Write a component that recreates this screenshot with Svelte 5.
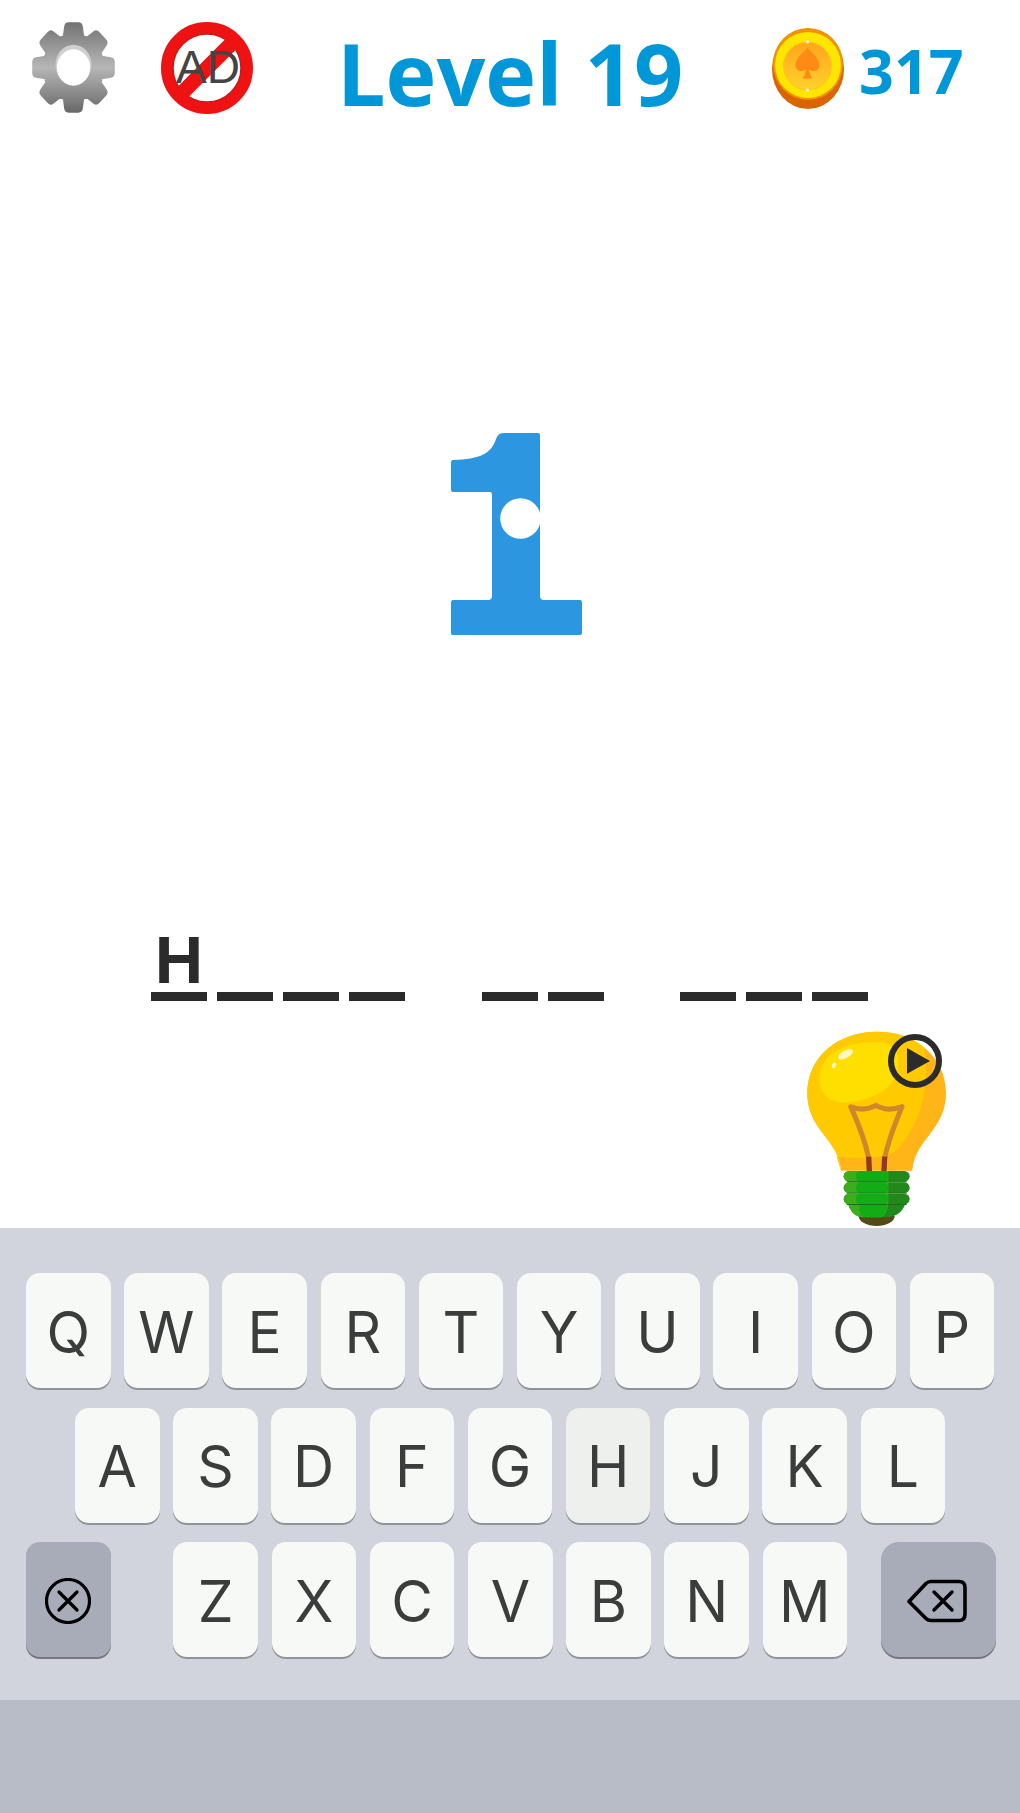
<script>
  const rows = ['QWERTYUIOP'.split(''), 'ASDFGHJKL'.split(''), 'ZXCVBNM'.split('')];
  const words = [4, 2, 3];

  // 8 toothed gear outline, centred on 0,0
  function gearPath() {
    let d = '';
    for (let i = 0; i < 8; i++) {
      const a = (i * Math.PI) / 4 - Math.PI / 2;
      const pts = [
        [a - 0.24, 29],
        [a - 0.13, 40],
        [a + 0.13, 40],
        [a + 0.24, 29]
      ];
      for (const [t, r] of pts) {
        d += (d ? 'L' : 'M') + (r * Math.cos(t)).toFixed(1) + ' ' + (r * Math.sin(t)).toFixed(1);
      }
    }
    return d + 'Z';
  }
</script>

<div class="screen">
  <header class="topbar">
    <svg class="gear" viewBox="-46 -46 92 92" preserveAspectRatio="none" aria-label="Settings">
      <defs>
        <linearGradient id="gearFill" gradientUnits="userSpaceOnUse" x1="0" y1="-46" x2="0" y2="46">
          <stop offset="0" stop-color="#707070" />
          <stop offset="0.5" stop-color="#b6b6b6" />
          <stop offset="1" stop-color="#666666" />
        </linearGradient>
      </defs>
      <path d={gearPath()} fill="url(#gearFill)" stroke="url(#gearFill)" stroke-width="10" stroke-linejoin="round" />
      <circle cx="0" cy="-3" r="19.500" fill="#cfcfcf" />
      <circle cx="0" cy="0" r="18" fill="#fff" />
    </svg>

    <svg class="noad" viewBox="0 0 94 94" aria-label="No ads">
      <circle cx="47" cy="47" r="40" fill="#fff" stroke="#ee1212" stroke-width="12" />
      <circle cx="47" cy="47" r="34" fill="none" stroke="#c81a1a" stroke-width="1.500" />
      <line x1="74" y1="20" x2="20" y2="74" stroke="#ee1212" stroke-width="15" />
      <text x="48" y="62" text-anchor="middle" class="adtext">AD</text>
    </svg>

    <h1>Level 19</h1>

    <svg class="coin" viewBox="0 0 72 82" aria-hidden="true">
      <defs>
        <linearGradient id="coinInner" x1="0" y1="0" x2="0" y2="1">
          <stop offset="0" stop-color="#ffa51c" />
          <stop offset="1" stop-color="#ffd22c" />
        </linearGradient>
      </defs>
      <ellipse cx="36" cy="42" rx="36" ry="40" fill="#d96400" />
      <ellipse cx="36" cy="37" rx="35" ry="36" fill="#f19200" />
      <ellipse cx="36" cy="38" rx="33" ry="33" fill="#ffe600" />
      <circle cx="35.500" cy="39" r="24" fill="url(#coinInner)" stroke="#ffc31e" stroke-width="1" />
      <path d="M35.500 20c3 6 12 10 12 18 0 6-7 8-10.500 4 .5 4 1.500 7 3.500 9.500H30.500c2-2.500 3-5.500 3.500-9.500-3.500 4-10.500 2-10.500-4 0-8 9-12 12-18Z" fill="#ff8a14" />
      <circle cx="35.500" cy="15" r="1.500" fill="#fff" />
      <circle cx="35.500" cy="63" r="1.500" fill="#fff" />
    </svg>
    <span class="score">317</span>
  </header>

  <div class="stage">
    <svg class="figure" viewBox="0 0 132 204" aria-label="1">
      <path
        d="M90 3Q90 1 88 1H53Q48 1 46 7C41 22 30 27 3 28Q1 28 1 31V58Q1 60 3 60H40Q42 60 42 63V164Q42 168 38 168H3Q1 168 1 171V201Q1 203 3 203H130Q132 203 132 201V171Q132 168 130 168H94Q90 168 90 164Z"
        fill="#2d96e0"
      />
      <circle cx="70.500" cy="86.500" r="20.300" fill="#fff" />
    </svg>
  </div>

  <div class="answer">
    {#each words as len, w}
      <div class="word">
        {#each Array(len) as _, i}
          <div class="slot">
            <span class="letter">{w === 0 && i === 0 ? 'H' : ''}</span>
            <span class="dash"></span>
          </div>
        {/each}
      </div>
    {/each}
  </div>

  <div class="hintrow">
    <svg class="bulb" viewBox="0 0 540 690" aria-label="Hint">
      <path d="M183 482C180 440 160 410 130 372C98 332 82 295 82 250C82 140 175 65 290 65C405 65 498 140 498 250C498 295 482 332 450 372C420 410 400 440 397 482Z" fill="#ffb518" />
      <path d="M183 482C180 440 160 410 130 372C98 332 82 295 82 250C82 140 175 65 290 65C350 65 395 80 430 110C455 200 430 340 345 425C300 445 240 448 170 440Z" fill="#ffcb00" />
      <path d="M118 205C122 130 190 96 290 96C345 96 365 130 352 185C335 245 265 272 195 278C150 281 116 250 118 205Z" fill="#ffdf00" />
      <ellipse cx="197" cy="133" rx="25" ry="11" transform="rotate(-28 197 133)" fill="#fff6c4" />
      <ellipse cx="162" cy="166" rx="6" ry="9" transform="rotate(25 162 166)" fill="#fff6c4" />
      <path d="M266 445C255 390 235 340 212 290C235 300 262 300 288 286C312 300 340 300 366 290C345 340 325 390 314 445" fill="none" stroke="#d0862a" stroke-width="15" stroke-linecap="round" stroke-linejoin="round" />
      <path d="M266 440L268 484M314 440L312 484" fill="none" stroke="#8f3a1c" stroke-width="16" />
      <path d="M236 618A54 30 0 0 0 344 618Z" fill="#544a16" />
      <path d="M205 582H375C372 600 350 622 320 622H250C225 622 208 600 205 582Z" fill="#20891a" />
      <path d="M205 582H325C322 600 318 622 300 622H250C225 622 208 600 205 582Z" fill="#3cae1c" />
      <path d="M238 582H322C322 600 318 622 300 622H255C240 622 238 600 238 582Z" fill="#12ac14" />
      {#each [483, 517, 551] as y}
        <rect x="191" {y} width="198" height="32" rx="16" fill="#20891a" />
        <path d="M207 {y}H325V{y + 32}H207A16 16 0 0 1 207 {y}Z" fill="#3cae1c" />
        <rect x="228" {y} width="97" height="32" rx="14" fill="#12ac14" />
        <rect x="200" y={y + 31} width="180" height="3" fill="#1b6e17" />
      {/each}
      <circle cx="405" cy="153" r="72" fill="none" stroke="#2b2b2b" stroke-width="18" />
      <path d="M381 114L450 153L381 191Z" fill="#2b2b2b" />
    </svg>
  </div>

  <div class="keyboard">
    <div class="row">
      {#each rows[0] as k}
        <div class="key">{k}</div>
      {/each}
    </div>
    <div class="row center">
      {#each rows[1] as k}
        <div class="key" class:pressed={k === 'H'}>{k}</div>
      {/each}
    </div>
    <div class="row">
      <div class="key fn clear">
        <svg width="46" height="46" viewBox="0 0 46 46" aria-label="Clear">
          <circle cx="23" cy="23" r="21.500" fill="none" stroke="#000" stroke-width="3.200" />
          <path d="M14 14L32 32M32 14L14 32" stroke="#000" stroke-width="3.200" stroke-linecap="round" />
        </svg>
      </div>
      {#each rows[2] as k}
        <div class="key">{k}</div>
      {/each}
      <div class="key fn back">
        <svg width="60" height="44" viewBox="0 0 60 44" aria-label="Delete">
          <path d="M2 22.500L19 4.500Q21 2.500 24 2.500H52Q58 2.500 58 8.500V35Q58 41.500 52 41.500H24Q21 41.500 19 39.500Z" fill="none" stroke="#000" stroke-width="3.600" stroke-linejoin="round" />
          <path d="M27 13L45 31M45 13L27 31" stroke="#000" stroke-width="3.400" stroke-linecap="round" />
        </svg>
      </div>
    </div>
  </div>
  <div class="homebar"></div>
</div>

<style>
  :global(body) {
    margin: 0;
    background: #fff;
  }

  .screen {
    width: 1020px;
    height: 1813px;
    display: flex;
    flex-direction: column;
    overflow: hidden;
    font-family: "Open Sans", sans-serif;
  }

  .topbar {
    height: 134px;
    flex: none;
    display: flex;
    align-items: flex-start;
    box-sizing: border-box;
    padding: 21px 0 0 31px;
  }

  .gear {
    width: 85px;
    height: 93px;
  }

  .noad {
    width: 94px;
    height: 94px;
    margin: 0 0 0 44px;
  }

  .adtext {
    font-family: "Liberation Sans", sans-serif;
    font-size: 46px;
    fill: #444;
  }

  h1 {
    margin: 2px 0 0 83px;
    font-size: 86px;
    line-height: 100px;
    font-weight: 700;
    color: #0097d8;
    white-space: nowrap;
  }

  .coin {
    width: 72px;
    height: 82px;
    margin: 6px 0 0 89px;
  }

  .score {
    margin: 15px 0 0 15px;
    font-size: 61px;
    line-height: 70px;
    font-weight: 700;
    color: #0097d8;
  }

  .stage {
    height: 801px;
    flex: none;
    box-sizing: border-box;
    padding: 298px 0 0 450px;
  }

  .figure {
    display: block;
    width: 132px;
    height: 204px;
  }

  .answer {
    height: 101px;
    flex: none;
    display: flex;
    gap: 76.500px;
    padding-left: 151px;
  }

  .word {
    display: flex;
    gap: 10px;
  }

  .slot {
    width: 56px;
    display: flex;
    flex-direction: column;
    align-items: center;
    justify-content: flex-end;
    height: 66px;
  }

  .letter {
    flex: none;
    font-family: "Liberation Sans", sans-serif;
    font-size: 67px;
    line-height: 57px;
    height: 61px;
    font-weight: 700;
    color: #2b2b2b;
  }

  .dash {
    width: 56px;
    height: 9px;
    flex: none;
    background: #2b2b2b;
  }

  .hintrow {
    height: 192px;
    flex: none;
    display: flex;
    justify-content: flex-end;
    padding-right: 60px;
  }

  .bulb {
    display: block;
    width: 180px;
    height: 230px;
    margin-top: -26px;
  }

  .keyboard {
    height: 472px;
    flex: none;
    box-sizing: border-box;
    padding: 45px 24px 0 26px;
    background: #d1d4dd;
    display: flex;
    flex-direction: column;
    gap: 19.500px;
  }

  .row {
    display: flex;
    gap: 13.700px;
  }

  .center {
    justify-content: center;
    padding-right: 2px;
  }

  .key {
    width: 84.500px;
    height: 115px;
    flex: none;
    box-sizing: border-box;
    padding-top: 3px;
    border-radius: 14px;
    background: #f7f9f6;
    box-shadow: 0 2px 0 #909397;
    display: flex;
    align-items: center;
    justify-content: center;
    font-family: Inter, sans-serif;
    font-size: 57px;
    color: #3a3d3b;
  }

  .pressed {
    background: #eef0ee;
  }

  .fn {
    background: #a8acb8;
    box-shadow: 0 2px 0 #74777f;
  }

  .clear {
    margin-right: 49.300px;
  }

  .back {
    width: 115px;
    margin-left: auto;
    border-radius: 18px;
    padding-right: 3px;
  }

  .homebar {
    flex: 1;
    background: #b7bcc7;
  }
</style>
